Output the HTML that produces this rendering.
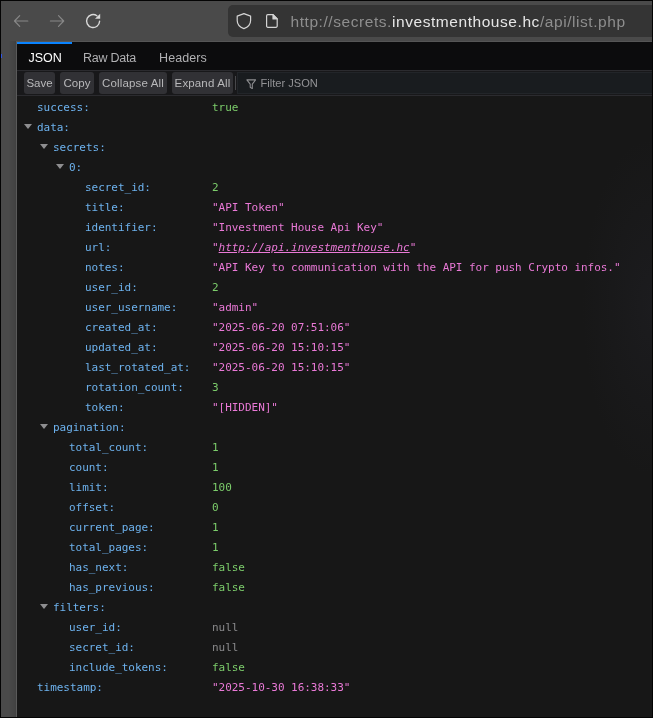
<!DOCTYPE html>
<html lang="en"><head><meta charset="utf-8"><title>list.php</title>
<style>
html,body{margin:0;padding:0}
body{width:653px;height:718px;overflow:hidden;background:#4a4a4a;position:relative;font-family:"Liberation Sans",Arial,sans-serif}
.frame{position:absolute;left:0;top:0;width:651px;height:716px;border:1px solid #040404;pointer-events:none;z-index:9}
.fleck{position:absolute;left:1px;top:54px;width:1px;height:4px;background:#2f55e6}
.shade{position:absolute;left:9px;top:41px;width:7px;height:676px;background:linear-gradient(90deg,rgba(0,0,0,0),rgba(0,0,0,.12))}
.edge{position:absolute;left:16px;top:41px;width:636px;height:676px;border-left:1px solid #5a5a5a;border-top:1px solid #565656;box-sizing:border-box}
.nav svg{position:absolute}
.urlbar{position:absolute;left:228px;top:5px;width:440px;height:32px;background:#343434;border-radius:5px}
.urlbar .txt{position:absolute;left:62.500px;top:1px;height:32px;line-height:32px;font-size:15.5px;color:#8e8e8e;white-space:nowrap;letter-spacing:.56px}
.urlbar .txt b{font-weight:normal;color:#e6e6e6}
.content{position:absolute;left:17px;top:42px;width:635px;height:675px;background:#171717;overflow:hidden}
.tabs{position:absolute;left:0;top:0;width:100%;height:28px;background:#0c0c0d}
.tab{position:absolute;top:0;height:28px;line-height:32px;font-size:12.5px;letter-spacing:-0.25px;color:#b1b1b3;padding:0 10px}
.tab.sel{color:#fff;border-top:2px solid #0a84ff;line-height:28px;box-sizing:border-box}
.toolbar{position:absolute;left:0;top:28px;width:100%;height:24px;background:#18181a;border-top:1px solid #2b2b2f;border-bottom:1px solid #2b2b2f}
.fbox{position:absolute;left:220px;top:1px;width:420px;height:20px;background:#191c1f;border:1px solid #222529}
.btn{position:absolute;top:1px;height:22px;line-height:22px;background:#313135;color:#b8b8ba;font-size:11.5px;border-radius:3px;text-align:center}
.sep{position:absolute;left:218px;top:5px;width:1px;height:14px;background:#48484b}
.filter{position:absolute;left:243.500px;top:1px;line-height:22px;font-size:11.1px;color:#939396}
.tree{position:absolute;left:0;top:56px;letter-spacing:-0.033px;width:100%;font-family:"DejaVu Sans Mono","Liberation Mono",monospace;font-size:11px}
.row{position:relative;height:20px;line-height:20px;white-space:nowrap}
.k{position:absolute;color:#6db2ee;top:0}
.v{position:absolute;left:195px;top:0}
.k{margin-left:-17px}
.tw{position:absolute;top:6px;margin-left:-17px;width:0;height:0;border-left:4.250px solid transparent;border-right:4.250px solid transparent;border-top:5.200px solid #8e8e90}
.s{color:#ea79d7} .n,.b{color:#7ccd6b} .u{color:#8a8a8c}
.v a{font-style:italic;text-decoration:underline;color:#ea79d7}
.glow{position:absolute;left:560px;top:100px;width:75px;height:330px;background:radial-gradient(ellipse 70px 170px at 100% 50%,rgba(60,60,80,.13),rgba(60,60,80,0))}
.all{position:absolute;left:0;top:0;width:653px;height:718px;will-change:transform}
</style></head><body><div class="all">
<div class="nav">
<svg style="left:13px;top:13.050px" width="16" height="16" viewBox="0 0 16 16" fill="none" stroke="#878787" stroke-width="1.200" stroke-linecap="round" stroke-linejoin="round"><path d="M14.800 8H1.800M6.700 2.700 1.500 8l5.200 5.300"/></svg>
<svg style="left:49px;top:13.050px" width="16" height="16" viewBox="0 0 16 16" fill="none" stroke="#878787" stroke-width="1.200" stroke-linecap="round" stroke-linejoin="round"><path d="M1.400 8h13M9.500 2.700 14.700 8l-5.200 5.300"/></svg>
<svg style="left:85px;top:13px" width="16" height="16" viewBox="0 0 16 16" fill="none" stroke="#d9d9d9" stroke-width="1.400" stroke-linecap="round"><path d="M14.600 8.300A6.500 6.500 0 1 1 11.900 2.750"/><path d="M15.200 .8v4.900H10z" fill="#d9d9d9" stroke="none"/></svg>
</div>
<div class="urlbar">
<svg style="position:absolute;left:8px;top:8px" width="16" height="17" viewBox="0 0 16 17" fill="none" stroke="#d4d4d4" stroke-width="1.200" stroke-linejoin="round"><path d="M7.900 .6 14.600 3.100V7.500C14.600 11.500 11.500 14.300 7.900 15.600 4.300 14.300 1.200 11.500 1.200 7.500V3.100z"/></svg>
<svg style="position:absolute;left:37px;top:8px" width="14" height="16" viewBox="0 0 14 16" fill="none" stroke="#d4d4d4" stroke-width="1.200" stroke-linejoin="round"><path d="M2.800 1.700h5.200l4.200 4.200v7.200a1.200 1.200 0 0 1-1.200 1.200h-8.200a1.200 1.200 0 0 1-1.200-1.200v-10.200a1.200 1.200 0 0 1 1.200-1.200z"/><path d="M8 1.700v4.200h4.200z" fill="#d4d4d4"/></svg>
<div class="txt">http://secrets.<b>investmenthouse.hc</b>/api/list.php</div>
</div>
<div class="shade"></div><div class="edge"></div><div class="fleck"></div>
<div class="content">
<div class="tabs">
<div class="tab sel" style="left:0;width:55px;padding-left:11.500px;letter-spacing:-.05px">JSON</div>
<div class="tab" style="left:56px">Raw Data</div>
<div class="tab" style="left:132px;letter-spacing:.1px">Headers</div>
</div>
<div class="toolbar">
<div class="btn" style="left:7px;width:31px">Save</div>
<div class="btn" style="left:43px;width:34px">Copy</div>
<div class="btn" style="left:82px;width:68px;letter-spacing:.15px">Collapse All</div>
<div class="btn" style="left:155px;width:61px;letter-spacing:.15px">Expand All</div>
<div class="sep"></div><div class="fbox"></div>
<svg style="position:absolute;left:228.500px;top:7.500px" width="10.500" height="10.500" viewBox="0 0 12 12" fill="none" stroke="#8f8f92" stroke-width="1.200" stroke-linejoin="round"><path d="M1 1h10L7.200 5.800V11L4.800 9.500V5.800z"/></svg>
<div class="filter">Filter JSON</div>
</div>
<div class="glow"></div>
<div class="tree">
<div class="row"><span class="k" style="left:37px">success:</span><span class="v b">true</span></div>
<div class="row"><i class="tw" style="left:24px"></i><span class="k" style="left:37px">data:</span></div>
<div class="row"><i class="tw" style="left:40px"></i><span class="k" style="left:53px">secrets:</span></div>
<div class="row"><i class="tw" style="left:56px"></i><span class="k" style="left:69px">0:</span></div>
<div class="row"><span class="k" style="left:85px">secret_id:</span><span class="v n">2</span></div>
<div class="row"><span class="k" style="left:85px">title:</span><span class="v s">&quot;API Token&quot;</span></div>
<div class="row"><span class="k" style="left:85px">identifier:</span><span class="v s">&quot;Investment House Api Key&quot;</span></div>
<div class="row"><span class="k" style="left:85px">url:</span><span class="v s">"<a>http://api.investmenthouse.hc</a>"</span></div>
<div class="row"><span class="k" style="left:85px">notes:</span><span class="v s">&quot;API Key to communication with the API for push Crypto infos.&quot;</span></div>
<div class="row"><span class="k" style="left:85px">user_id:</span><span class="v n">2</span></div>
<div class="row"><span class="k" style="left:85px">user_username:</span><span class="v s">&quot;admin&quot;</span></div>
<div class="row"><span class="k" style="left:85px">created_at:</span><span class="v s">&quot;2025-06-20 07:51:06&quot;</span></div>
<div class="row"><span class="k" style="left:85px">updated_at:</span><span class="v s">&quot;2025-06-20 15:10:15&quot;</span></div>
<div class="row"><span class="k" style="left:85px">last_rotated_at:</span><span class="v s">&quot;2025-06-20 15:10:15&quot;</span></div>
<div class="row"><span class="k" style="left:85px">rotation_count:</span><span class="v n">3</span></div>
<div class="row"><span class="k" style="left:85px">token:</span><span class="v s">&quot;[HIDDEN]&quot;</span></div>
<div class="row"><i class="tw" style="left:40px"></i><span class="k" style="left:53px">pagination:</span></div>
<div class="row"><span class="k" style="left:69px">total_count:</span><span class="v n">1</span></div>
<div class="row"><span class="k" style="left:69px">count:</span><span class="v n">1</span></div>
<div class="row"><span class="k" style="left:69px">limit:</span><span class="v n">100</span></div>
<div class="row"><span class="k" style="left:69px">offset:</span><span class="v n">0</span></div>
<div class="row"><span class="k" style="left:69px">current_page:</span><span class="v n">1</span></div>
<div class="row"><span class="k" style="left:69px">total_pages:</span><span class="v n">1</span></div>
<div class="row"><span class="k" style="left:69px">has_next:</span><span class="v b">false</span></div>
<div class="row"><span class="k" style="left:69px">has_previous:</span><span class="v b">false</span></div>
<div class="row"><i class="tw" style="left:40px"></i><span class="k" style="left:53px">filters:</span></div>
<div class="row"><span class="k" style="left:69px">user_id:</span><span class="v u">null</span></div>
<div class="row"><span class="k" style="left:69px">secret_id:</span><span class="v u">null</span></div>
<div class="row"><span class="k" style="left:69px">include_tokens:</span><span class="v b">false</span></div>
<div class="row"><span class="k" style="left:37px">timestamp:</span><span class="v s">&quot;2025-10-30 16:38:33&quot;</span></div>
</div>
</div>
<div class="frame"></div>
</div></body></html>
